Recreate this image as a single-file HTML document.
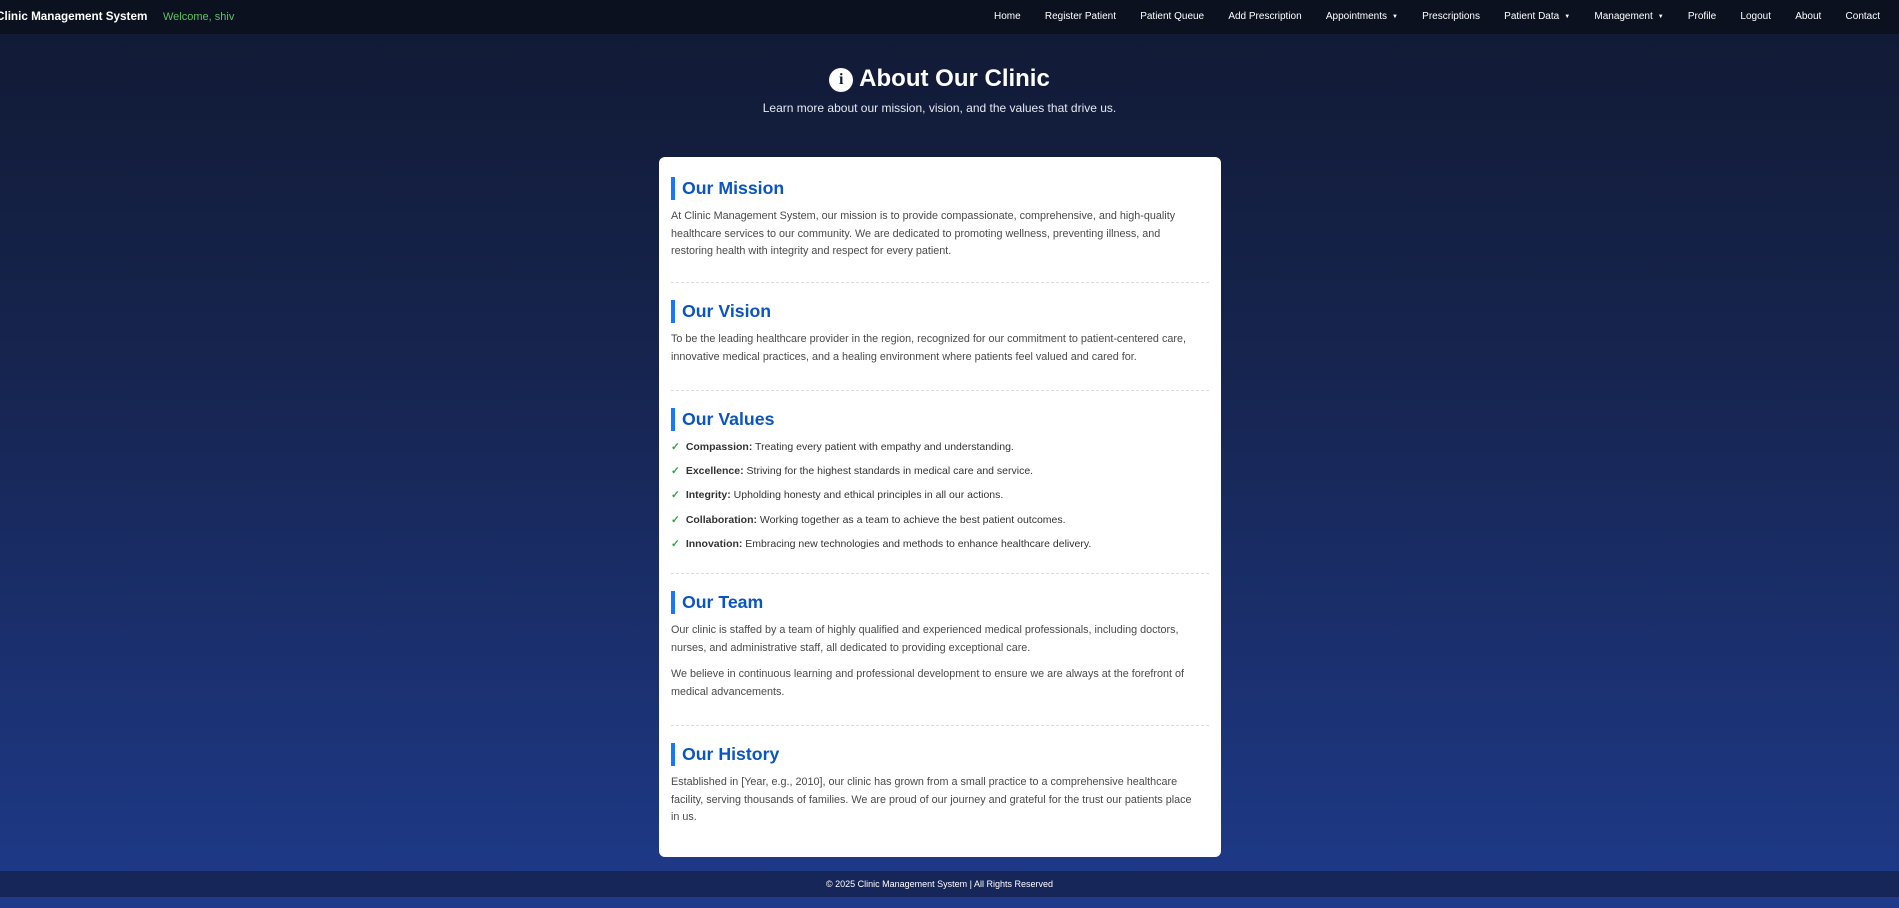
<!DOCTYPE html>
<html><head><meta charset="utf-8"><style>
*{margin:0;padding:0;box-sizing:border-box}
html,body{width:1899px;height:908px;overflow:hidden}
body{font-family:"Liberation Sans",Arial,sans-serif;background:linear-gradient(180deg,#111a33 0%,#16244f 40%,#1e3a8a 100%);position:relative}
.nav{position:absolute;left:0;top:0;width:1899px;height:34px;background:#0b111e;color:#fff}
.brand{position:absolute;left:-4px;top:10px;font-weight:bold;font-size:11.7px}
.welcome{position:absolute;left:163px;top:11px;font-size:11px;color:#5cc264}
.links{position:absolute;right:19px;top:11px;display:flex;gap:24.2px;font-size:10px}
.links span .c{font-size:6px;margin-left:5px;vertical-align:1px}
h1{position:absolute;left:-10px;width:1899px;top:65px;text-align:center;color:#fff;font-size:24px;font-weight:bold}
.ic{display:inline-block;width:24px;height:24px;border-radius:50%;background:#fff;color:#111a33;font-size:16px;line-height:24px;text-align:center;font-family:"Liberation Serif",serif;font-weight:bold;vertical-align:2px;margin-right:6px}
.sub{position:absolute;left:-10px;width:1899px;top:101px;text-align:center;color:#e5e9f2;font-size:12px}
.card{position:absolute;left:659px;top:157px;width:562px;height:700px;background:#fff;border-radius:6px;padding:20px 12px 0 12px}
h2{color:#0b55c2;font-size:17.7px;font-weight:bold;border-left:4px solid #1a75ff;padding-left:7px;line-height:23px;margin-bottom:8px}
p{font-size:10.8px;color:#4a4a4a;line-height:17.6px;margin-bottom:9px;white-space:nowrap}
.sec{border-bottom:1px dashed #d8dce2}
ul{list-style:none;font-size:10.5px;color:#333}
li{height:24.2px;line-height:17px}
li::before{content:"✓";color:#28a745;font-weight:bold;margin-right:6px}
.foot{position:absolute;left:0;top:871px;width:1899px;height:26px;background:#172658;color:#fff;font-size:9px;text-align:center;line-height:26px;text-indent:-20px}
</style></head><body>
<div class="nav"><div class="brand">Clinic Management System</div><div class="welcome">Welcome, shiv</div>
<div class="links"><span>Home</span><span>Register Patient</span><span>Patient Queue</span><span>Add Prescription</span><span>Appointments<span class="c">▼</span></span><span>Prescriptions</span><span>Patient Data<span class="c">▼</span></span><span>Management<span class="c">▼</span></span><span>Profile</span><span>Logout</span><span>About</span><span>Contact</span></div></div>
<h1><span class="ic">i</span>About Our Clinic</h1>
<div class="sub">Learn more about our mission, vision, and the values that drive us.</div>
<div class="card">
<div class="sec" style="height:106px"><h2>Our Mission</h2><p>At Clinic Management System, our mission is to provide compassionate, comprehensive, and high-quality<br>healthcare services to our community. We are dedicated to promoting wellness, preventing illness, and<br>restoring health with integrity and respect for every patient.</p></div>
<div class="sec" style="height:108px;padding-top:17px"><h2>Our Vision</h2><p>To be the leading healthcare provider in the region, recognized for our commitment to patient-centered care,<br>innovative medical practices, and a healing environment where patients feel valued and cared for.</p></div>
<div class="sec" style="height:183px;padding-top:17px"><h2>Our Values</h2><ul>
<li><b>Compassion:</b> Treating every patient with empathy and understanding.</li>
<li><b>Excellence:</b> Striving for the highest standards in medical care and service.</li>
<li><b>Integrity:</b> Upholding honesty and ethical principles in all our actions.</li>
<li><b>Collaboration:</b> Working together as a team to achieve the best patient outcomes.</li>
<li><b>Innovation:</b> Embracing new technologies and methods to enhance healthcare delivery.</li></ul></div>
<div class="sec" style="height:152px;padding-top:17px"><h2>Our Team</h2><p>Our clinic is staffed by a team of highly qualified and experienced medical professionals, including doctors,<br>nurses, and administrative staff, all dedicated to providing exceptional care.</p><p>We believe in continuous learning and professional development to ensure we are always at the forefront of<br>medical advancements.</p></div>
<div style="padding-top:17px"><h2>Our History</h2><p>Established in [Year, e.g., 2010], our clinic has grown from a small practice to a comprehensive healthcare<br>facility, serving thousands of families. We are proud of our journey and grateful for the trust our patients place<br>in us.</p></div>
</div>
<div class="foot">© 2025 Clinic Management System | All Rights Reserved</div>
</body></html>
